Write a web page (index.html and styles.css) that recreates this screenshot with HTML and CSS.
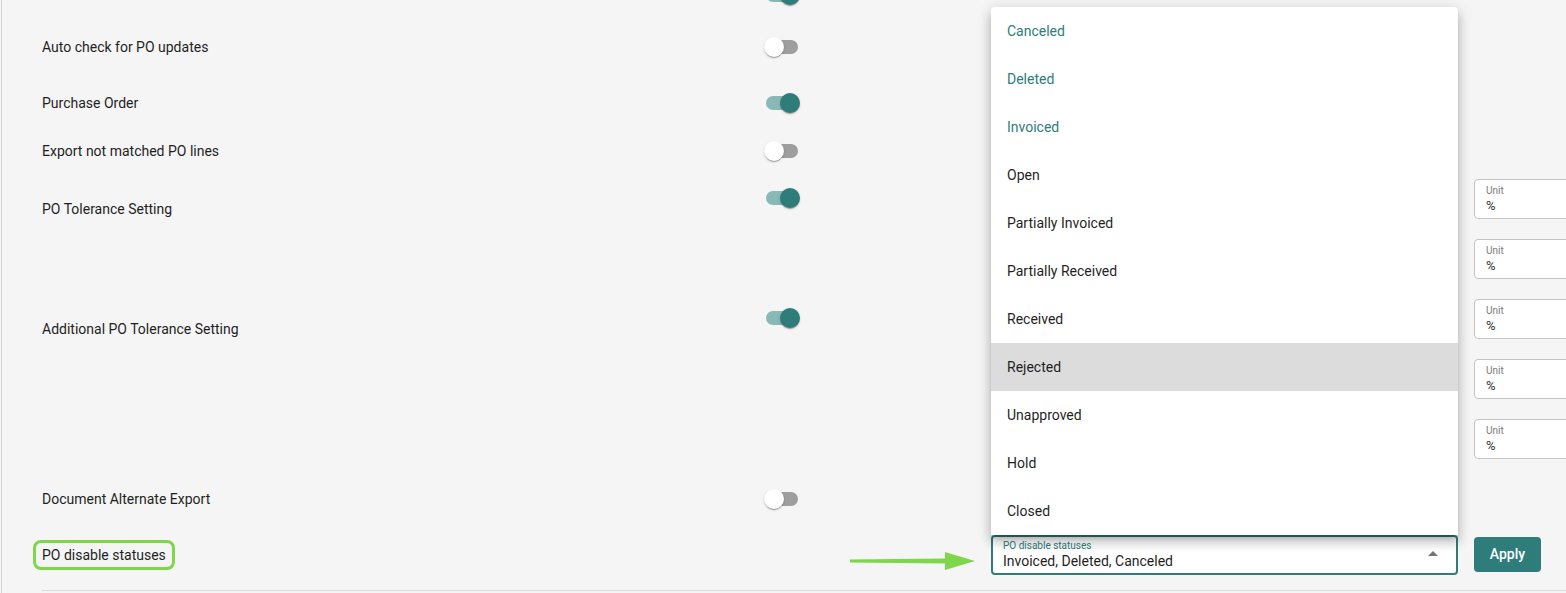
FILE: index.html
```html
<!DOCTYPE html>
<html lang="en">
<head>
<meta charset="utf-8">
<title>PO settings</title>
<link rel="stylesheet" href="styles.css">
</head>
<body>
<div class="page">
  <div class="settings">
    <div class="row h48">
      <div class="label"></div>
      <div class="cell-toggle"><span class="toggle on"><span class="track"></span><span class="thumb"></span></span></div>
    </div>
    <div class="row h56">
      <div class="label">Auto check for PO updates</div>
      <div class="cell-toggle"><span class="toggle"><span class="track"></span><span class="thumb"></span></span></div>
    </div>
    <div class="row h56">
      <div class="label">Purchase Order</div>
      <div class="cell-toggle"><span class="toggle on"><span class="track"></span><span class="thumb"></span></span></div>
    </div>
    <div class="row h40">
      <div class="label">Export not matched PO lines</div>
      <div class="cell-toggle"><span class="toggle"><span class="track"></span><span class="thumb"></span></span></div>
    </div>
    <div class="row top tol2">
      <div class="label lbl-tol">PO Tolerance Setting</div>
      <div class="cell-toggle tg-tol"><span class="toggle on"><span class="track"></span><span class="thumb"></span></span></div>
      <div class="cell-field"></div>
      <div class="cell-aux units">
        <div class="unit"><span class="unit-label">Unit</span><span class="unit-value">%</span></div>
        <div class="unit"><span class="unit-label">Unit</span><span class="unit-value">%</span></div>
      </div>
    </div>
    <div class="row top tol3">
      <div class="label lbl-tol">Additional PO Tolerance Setting</div>
      <div class="cell-toggle tg-tol"><span class="toggle on"><span class="track"></span><span class="thumb"></span></span></div>
      <div class="cell-field"></div>
      <div class="cell-aux units">
        <div class="unit"><span class="unit-label">Unit</span><span class="unit-value">%</span></div>
        <div class="unit"><span class="unit-label">Unit</span><span class="unit-value">%</span></div>
        <div class="unit"><span class="unit-label">Unit</span><span class="unit-value">%</span></div>
      </div>
    </div>
    <div class="row h56">
      <div class="label">Document Alternate Export</div>
      <div class="cell-toggle"><span class="toggle"><span class="track"></span><span class="thumb"></span></span></div>
    </div>
    <div class="row h56">
      <div class="label"><span class="highlight">PO disable statuses</span></div>
      <div class="cell-toggle arrow-cell">
        <svg class="arrow" width="130" height="24" viewBox="0 0 130 24">
          <polygon points="0,7.5 95,6.5 95,0 125,9 95,18 95,11.5 0,10.5" fill="#7ed64a"/>
        </svg>
      </div>
      <div class="cell-field">
        <div class="select">
          <ul class="menu">
            <li class="sel">Canceled</li>
            <li class="sel">Deleted</li>
            <li class="sel">Invoiced</li>
            <li>Open</li>
            <li>Partially Invoiced</li>
            <li>Partially Received</li>
            <li>Received</li>
            <li class="hover">Rejected</li>
            <li>Unapproved</li>
            <li>Hold</li>
            <li>Closed</li>
          </ul>
          <span class="select-label">PO disable statuses</span>
          <span class="select-value">Invoiced, Deleted, Canceled</span>
          <span class="caret"></span>
        </div>
      </div>
      <div class="cell-aux"><button class="apply">Apply</button></div>
    </div>
    <div class="divider"></div>
  </div>
</div>
</body>
</html>
```

FILE: styles.css
```css
* { box-sizing: border-box; }
html, body { margin: 0; padding: 0; }
body {
  background: #f5f5f5;
  font-family: Roboto, "Liberation Sans", Arial, sans-serif;
  color: #212121;
  overflow: hidden;
  width: 1566px;
  height: 593px;
}
.page {
  margin-left: 1px;
  border-left: 1px solid #d6d6d6;
  height: 593px;
  overflow: hidden;
}
.settings {
  margin-top: -29px;
  padding-left: 40px;
}
.row {
  display: grid;
  grid-template-columns: 722px 227px 467px 136px;
  align-items: center;
}
.row.top { align-items: start; }
.h48 { height: 48px; }
.h56 { height: 56px; }
.h40 { height: 40px; }
.tol2 { height: 120px; padding-top: 8px; }
.tol3 { height: 180px; padding-top: 8px; }
.label {
  font-size: 14px;
  line-height: 20px;
  color: #1f1f1f;
}
.lbl-tol { margin-top: 20px; }
.tg-tol { margin-top: 9px; }
.cell-toggle { position: relative; height: 20px; }
.toggle {
  position: relative;
  display: block;
  width: 36px;
  height: 20px;
}
.toggle .track {
  position: absolute;
  left: 2px;
  top: 3px;
  width: 32px;
  height: 14px;
  border-radius: 7px;
  background: #9e9e9e;
}
.toggle .thumb {
  position: absolute;
  left: 0;
  top: 0;
  width: 20px;
  height: 20px;
  border-radius: 50%;
  background: #fff;
  box-shadow: 0 2px 1px -1px rgba(0,0,0,.2), 0 1px 1px 0 rgba(0,0,0,.14), 0 1px 3px 0 rgba(0,0,0,.12);
}
.toggle.on .track { background: #88b9b7; }
.toggle.on .thumb { left: 16px; background: #2e7d7a; }
.units {
  display: flex;
  flex-direction: column;
  gap: 20px;
}
.cell-aux { padding-left: 16px; }
.unit {
  height: 40px;
  border: 1px solid #c4c4c4;
  border-radius: 4px;
  background: #fff;
  padding: 4px 11px 0;
  display: flex;
  flex-direction: column;
}
.unit-label {
  font-size: 10px;
  line-height: 14px;
  color: #7a7a7a;
}
.unit-value {
  font-size: 13px;
  line-height: 16px;
  color: #333;
}
.highlight {
  display: inline-block;
  padding: 0 4px;
  margin-left: -4px;
  outline: 3px solid #7ed64a;
  outline-offset: 2px;
  border-radius: 3px;
}
.arrow {
  position: absolute;
  left: 86px;
  top: 7px;
}
.select {
  position: relative;
  height: 40px;
  border: 2px solid #2e7d7a;
  border-radius: 4px;
  background: #fff;
  padding: 2px 10px 0;
  display: flex;
  flex-direction: column;
}
.select-label {
  font-size: 10px;
  line-height: 13px;
  color: #2e7d7a;
}
.select-value {
  font-size: 14px;
  line-height: 18px;
  color: #1f1f1f;
}
.caret {
  position: absolute;
  right: 18px;
  top: 14px;
  width: 0;
  height: 0;
  border-left: 5px solid transparent;
  border-right: 5px solid transparent;
  border-bottom: 5px solid #757575;
}
.menu {
  position: absolute;
  left: -2px;
  right: -2px;
  bottom: calc(100% + 2px);
  margin: 0;
  padding: 0;
  list-style: none;
  background: #fff;
  border-radius: 4px 4px 0 0;
  box-shadow: 0 5px 5px -3px rgba(0,0,0,.2), 0 8px 10px 1px rgba(0,0,0,.14), 0 3px 14px 2px rgba(0,0,0,.12);
  z-index: 5;
}
.menu li {
  height: 48px;
  line-height: 48px;
  padding-left: 16px;
  font-size: 14px;
  color: #1f1f1f;
}
.menu li.sel { color: #2e7d7a; }
.menu li.hover { background: #dcdcdc; }
.apply {
  width: 67px;
  height: 35px;
  border: none;
  border-radius: 4px;
  background: #2e7d7a;
  color: #fff;
  font-family: Roboto, "Liberation Sans", Arial, sans-serif;
  font-size: 14px;
  font-weight: 500;
  margin-top: -2px;
}
.divider {
  margin-top: 7px;
  height: 1px;
  background: #dcdcdc;
}
```
